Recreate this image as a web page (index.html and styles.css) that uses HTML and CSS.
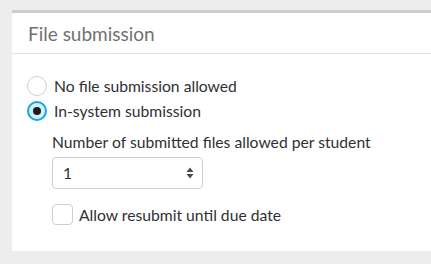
FILE: index.html
```html
<!DOCTYPE html>
<html lang="en">
<head>
    <meta charset="UTF-8">
    <title>File submission</title>
    <link rel="stylesheet" href="styles.css">
</head>
<body>
    <div class="panel">
        <div class="panel-header">File submission</div>
        <div class="panel-body">
            <div class="radio-group">
                <label class="radio-row">
                    <span class="radio"></span>
                    <span>No file submission allowed</span>
                </label>
                <label class="radio-row">
                    <span class="radio checked"></span>
                    <span>In-system submission</span>
                </label>
            </div>
            <div class="sub-options">
                <div class="field-label">Number of submitted files allowed per student</div>
                <div class="select">
                    <span>1</span>
                    <svg width="8" height="12" viewBox="0 0 8 12">
                        <path d="M4 0.5L7.5 5H0.5z M4 11.5L0.5 7H7.5z" fill="#494c4e" />
                    </svg>
                </div>
                <label class="check-row">
                    <span class="checkbox"></span>
                    <span>Allow resubmit until due date</span>
                </label>
            </div>
        </div>
    </div>
</body>
</html>
```

FILE: styles.css
```css
body {
    margin: 0;
    background-color: #ededed;
    font-family: Lato, "Open Sans", sans-serif;
    color: #2f3033;
    height: 264px;
    overflow: hidden;
}

.panel {
    margin: 10px 0 0 12px;
    border-top: 3px solid #cdcdd0;
    background: white;
    height: 238px;
}

.panel-header {
    height: 40px;
    border-bottom: 1px solid #e3e3e3;
    padding-left: 16px;
    display: flex;
    align-items: center;
    font-size: 19px;
    color: #6e7275;
}

.panel-body {
    padding: 22px 0 0 15px;
    font-size: 15.7px;
}

.radio-group {
    display: flex;
    flex-direction: column;
    gap: 5px;
}

.radio-row,
.check-row {
    display: flex;
    align-items: center;
    gap: 7px;
    height: 20px;
}

.radio {
    width: 18px;
    height: 18px;
    border: 1px solid #cfcfcf;
    border-radius: 50%;
    background: white;
    display: flex;
    align-items: center;
    justify-content: center;
}

.radio.checked {
    width: 16px;
    height: 16px;
    border: 2px solid #13a4ee;
    background: #d5eefc;
}

.radio.checked::after {
    content: "";
    width: 8px;
    height: 8px;
    border-radius: 50%;
    background: #1c1c1c;
}

.sub-options {
    padding-left: 25px;
    margin-top: 12px;
}

.field-label {
    line-height: 18px;
}

.select {
    margin-top: 6px;
    width: 131px;
    height: 30px;
    border: 1px solid #cfcfcf;
    border-radius: 4px;
    display: flex;
    align-items: center;
    justify-content: space-between;
    padding: 0 8px 0 10px;
}

.check-row {
    margin-top: 15px;
    height: 21px;
    gap: 6px;
}

.checkbox {
    width: 19px;
    height: 19px;
    border: 1px solid #cfcfcf;
    border-radius: 4px;
}
```
